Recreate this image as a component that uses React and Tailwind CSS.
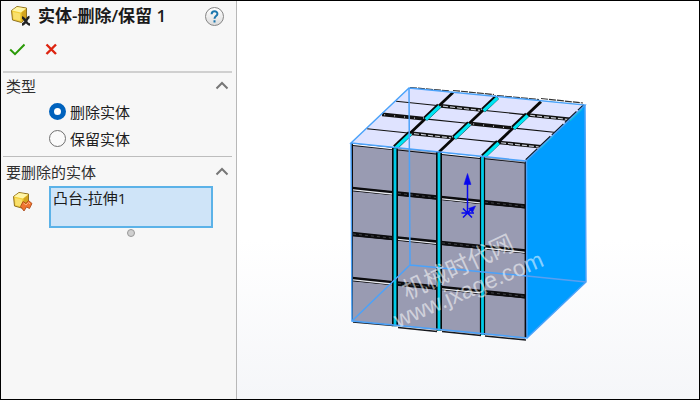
import React, { useState } from 'react';

const COLUMNS = [[352, 393], [397, 437], [441, 481], [484, 526]];
const ROW_LINES = [189, 234, 279];
const DEPTH_STEPS = [0, 0.26, 0.52, 0.76, 1];

// Point on the top face: x along the front edge, t is the depth
const topPoint = (x, t) => [x + 58 * t, 143 + (x - 352) * 0.104 - 55 * t];
const frontY = (x, y) => y + (x - 352) * 0.1;
const toPoints = (list) => list.map((p) => p.join(',')).join(' ');

function BodyIcon({ children }) {
  return (
    <svg className="h-6 w-6 shrink-0" viewBox="0 0 24 24" aria-hidden="true">
      <path d="M2.5 6.5 8 2.5 17.5 4 17.5 14 12.5 18.5 3.5 16Z" fill="#f3cf3a" stroke="#927321" strokeLinejoin="round" />
      <path d="M3 6.5 8 3 17 4.5 12 8.5Z" fill="#fff6a8" />
      <path d="M12.5 8.5 17 5V13.5L12.5 18Z" fill="#d4a51f" />
      <path d="M4 8 11 9.5V16.5L4.5 15Z" fill="#f9e06c" />
      {children}
    </svg>
  );
}

function SectionHeader({ title, open, onToggle }) {
  return (
    <div className="flex h-[25px] items-center justify-between pl-[3px] pr-0.5">
      <h2 className="text-[15px] leading-5 text-[#303030]">{title}</h2>
      <button type="button" aria-label={title} aria-expanded={open} onClick={onToggle}>
        <svg className="h-3 w-4" viewBox="0 0 16 12" fill="none" stroke="#777" strokeWidth="2" aria-hidden="true">
          <path d={open ? 'M2.5 8.5 8 3 13.5 8.5' : 'M2.5 3 8 8.5 13.5 3'} />
        </svg>
      </button>
    </div>
  );
}

function RadioOption({ label, value, selected, onSelect }) {
  return (
    <label className="flex h-[27px] items-center gap-1 text-[15px] leading-5 text-[#202020]">
      <input
        type="radio"
        name="body-mode"
        value={value}
        checked={selected}
        onChange={() => onSelect(value)}
        className="h-[17px] w-[17px] appearance-none rounded-full border border-[#707070] bg-[#fafafa] checked:border-[5px] checked:border-[#0062bd] checked:bg-white"
      />
      {label}
    </label>
  );
}

function Cube() {
  return (
    <svg className="h-full w-full" viewBox="237 1 462 398" role="img" aria-label="凸台-拉伸1">
      {/* Bodies under the tiles */}
      <polygon points="351,143 409,88 585,105 526,161" fill="#f4f6ff" />
      <polygon points="351,143 526,161 527,338 352,321" fill="#0b0b0d" />
      <polygon points="526,161 585,105 586,282 527,338" fill="#009dff" />

      {/* Top face */}
      {COLUMNS.map(([x1, x2], c) => (
        <g key={x1}>
          {DEPTH_STEPS.slice(0, 4).map((t, r) => (
            <polygon
              key={t}
              points={toPoints([topPoint(x1, t), topPoint(x2, t), topPoint(x2, DEPTH_STEPS[r + 1]), topPoint(x1, DEPTH_STEPS[r + 1])])}
              fill="#dfe3ff"
            />
          ))}
          {[1, 2, 3].map((r) => {
            const [ax, ay] = topPoint(x1, DEPTH_STEPS[r]);
            const [bx, by] = topPoint(x2, DEPTH_STEPS[r]);
            const thick = (c + r) % 2 === 0;
            return (
              <g key={r}>
                <line x1={ax} y1={ay} x2={bx} y2={by} stroke="#111" strokeWidth={thick ? 3.6 : 1.1} />
                {thick && (
                  <line x1={ax + 2} y1={ay + 0.3} x2={bx - 1} y2={by + 0.3} stroke="#c6c9d2" strokeWidth="1.2" strokeDasharray={r === 2 ? '1 9' : '5 2'} />
                )}
              </g>
            );
          })}
        </g>
      ))}
      {[395, 439, 483].map((x, c) => {
        const [ax, ay] = topPoint(x, 0);
        const [bx, by] = topPoint(x, 1);
        return (
          <g key={x}>
            <line x1={ax} y1={ay} x2={bx} y2={by} stroke="#080808" strokeWidth="2.8" />
            {[0, 1, 2, 3].filter((r) => (r + c) % 2 === 0).map((r) => {
              const [sx, sy] = topPoint(x, DEPTH_STEPS[r]);
              const [ex, ey] = topPoint(x, DEPTH_STEPS[r + 1]);
              return (
                <g key={r}>
                  <line x1={sx} y1={sy} x2={ex} y2={ey} stroke="#080808" strokeWidth="5.4" />
                  <line x1={sx + 0.6} y1={sy + 0.6} x2={ex + 0.6} y2={ey + 0.6} stroke="#00e4f2" strokeWidth="3.4" />
                </g>
              );
            })}
          </g>
        );
      })}
      <path d="M526 160 584 105" stroke="#101820" strokeWidth="2.2" strokeDasharray="16 2" />
      <path d="M540 148.5 553 136M570 120.500 582 109" stroke="#00ccd8" strokeWidth="1.6" />
      <path d="M410 87.5 450 91M453 90.500l41 4M497 95.500l42 4M541 98.500l42 4.500" stroke="#333" strokeWidth="1.2" strokeDasharray="7 1" />

      {/* Front face */}
      {COLUMNS.map(([x1, x2], c) => {
        const stops = [144, ...ROW_LINES, 323];
        return (
          <g key={x1}>
            {stops.slice(0, 4).map((y, r) => (
              <polygon
                key={y}
                points={toPoints([
                  [x1 + 1, frontY(x1, y + 2)],
                  [x2 - 1, frontY(x2, y + 2)],
                  [x2 - 1, frontY(x2, stops[r + 1] - 1.5)],
                  [x1 + 1, frontY(x1, stops[r + 1] - 1.5)],
                ])}
                fill="#999bb2"
              />
            ))}
            {ROW_LINES.map((y, r) => {
              const light = (c + r) % 2 === 0;
              return (
                <g key={y}>
                  <line x1={x1} y1={frontY(x1, y)} x2={x2} y2={frontY(x2, y)} stroke="#0c0c0e" strokeWidth="4.4" />
                  <line
                    x1={x1 + 1}
                    y1={frontY(x1, light ? y + 0.9 : y)}
                    x2={x2 - 1}
                    y2={frontY(x2, light ? y + 0.9 : y)}
                    stroke={light ? '#e8eaf0' : '#66686f'}
                    strokeWidth={light ? 1.3 : 0.6}
                    strokeDasharray={light ? undefined : '3 3'}
                  />
                </g>
              );
            })}
            <line x1={x1 + 1} y1={frontY(x1, 144.3)} x2={x2 - 1} y2={frontY(x2, 144.3)} stroke={c % 2 === 0 ? '#f7f8ff' : '#a6a9b8'} strokeWidth="1.5" />
          </g>
        );
      })}
      {[395, 439, 482.5].map((x) => (
        <g key={x}>
          <line x1={x} y1={frontY(x, 144)} x2={x} y2={frontY(x, 322)} stroke="#080808" strokeWidth="5.2" />
          <line x1={x} y1={frontY(x, 144)} x2={x} y2={frontY(x, 322)} stroke="#00cbe8" strokeWidth="2.8" />
        </g>
      ))}
      <path d="M353 322 393 325.500M398 327.500l39 4M442 331.500l39 4M485 336l41 4" stroke="#16181d" strokeWidth="1.5" />
      <path d="M525.300 163V338" stroke="#0c0c0e" strokeWidth="1.4" />

      {/* Selected body outline */}
      <g fill="none" stroke="#4ba2fa" strokeWidth="1.5">
        <path d="M351 143 409 88 585 105 526 161Z" />
        <path d="M351 143 352 321 527 338 526.500 161M527 338 586 282 585 105" />
        <path d="M409 88 410 265 352 321M410 265 527 276" />
        <path d="M527 276 586 282" stroke="#5a9ff0" />
      </g>

      {/* Origin */}
      <g stroke="#0808ee" fill="none" strokeWidth="1.5">
        <path d="M467.5 213V184M461.5 213H474M463 208.5l9 9M463 217.5l9-9" />
        <path d="M467.5 173.5 471 184.5H464Z" fill="#0808ee" strokeWidth="0.5" />
        <path d="M475.5 206 468.5 208.5 472.5 212.5Z" fill="#0808ee" strokeWidth="0.5" />
      </g>

      {/* Watermark */}
      <g fill="#ffffff" fillOpacity="0.55" fontFamily='"Liberation Sans", "Noto Sans CJK SC", sans-serif'>
        <text transform="translate(407 300) rotate(-25)" fontSize="24">机械时代网</text>
        <text transform="translate(398 328) rotate(-23)" fontSize="23">www.jxage.com</text>
      </g>
    </svg>
  );
}

export default function App() {
  const [mode, setMode] = useState('delete');
  const [typeOpen, setTypeOpen] = useState(true);
  const [bodiesOpen, setBodiesOpen] = useState(true);

  return (
    <div className="flex h-screen border border-black bg-white font-['Open_Sans','Noto_Sans_CJK_SC',sans-serif]">
      {/* Property panel */}
      <aside className="w-[236px] shrink-0 border-r border-[#b8b8b8] bg-[#f7f7f7] pl-[2px] pr-1">
        <header className="flex h-[30px] items-center pl-1.5 pr-2">
          <BodyIcon>
            <path d="M13 13.5c3 0 4 7 8 7M20.5 13c-3 0-3.5 7.5-7.5 7.5" fill="none" stroke="#222" strokeWidth="2.3" />
          </BodyIcon>
          <h1 className="flex-1 whitespace-nowrap pl-[5px] text-[17px] font-semibold leading-6 text-[#1b1b1b]">实体-删除/保留 1</h1>
          <button
            type="button"
            aria-label="帮助"
            className="h-[19px] w-[19px] rounded-full border border-[#858585] bg-linear-to-b from-white to-[#dcdcdc]"
          >
            <svg className="h-full w-full" viewBox="0 0 17 17" fill="none" stroke="#1b76ad" strokeWidth="2" aria-hidden="true">
              <path d="M5.6 6.2C5.700 2.200 11.600 2.400 11.400 6 11.300 8.200 8.500 8 8.500 10.800M8.500 12.300v2.200" />
            </svg>
          </button>
        </header>

        <div className="flex h-10 items-center gap-4 pb-1 pl-1">
          <button type="button" aria-label="确定" className="flex h-5 w-5 items-center justify-center">
            <svg className="h-4 w-4" viewBox="0 0 16 16" fill="none" stroke="#2b9a08" strokeWidth="2" aria-hidden="true">
              <path d="M1.2 8.500 6 13.200 15.500 3.500" />
            </svg>
          </button>
          <button type="button" aria-label="取消" className="flex h-5 w-5 items-center justify-center">
            <svg className="h-4 w-4" viewBox="0 0 16 16" fill="none" stroke="#dd2410" strokeWidth="2.4" aria-hidden="true">
              <path d="M1.500 3.500 11 13M11 3.500 1.500 13" />
            </svg>
          </button>
        </div>

        <section className="border-t-2 border-[#d0d0d0]">
          <SectionHeader title="类型" open={typeOpen} onToggle={() => setTypeOpen(!typeOpen)} />
          {typeOpen && (
            <div className="pb-1 pl-[46px]">
              <RadioOption label="删除实体" value="delete" selected={mode === 'delete'} onSelect={setMode} />
              <RadioOption label="保留实体" value="keep" selected={mode === 'keep'} onSelect={setMode} />
            </div>
          )}
        </section>

        <section className="border-t border-[#bdbdbd] pt-0.5">
          <SectionHeader title="要删除的实体" open={bodiesOpen} onToggle={() => setBodiesOpen(!bodiesOpen)} />
          {bodiesOpen && (
            <div className="flex pl-2 pt-0.5">
              <div className="w-[38px] pt-1">
                <BodyIcon>
                  <path d="M9.5 16.5 12 11.5 15 13.5 17.5 10.5 21 13.5 18.5 18.5 15.5 17 13 21Z" fill="#ef7430" stroke="#a64212" strokeWidth="0.8" />
                  <path d="M12.5 13 15 15 17.5 12.5 19 14" fill="none" stroke="#ffb27d" />
                </BodyIcon>
              </div>
              <div className="w-[164px]">
                <textarea
                  readOnly
                  aria-label="要删除的实体"
                  defaultValue="凸台-拉伸1"
                  className="block h-[42px] w-full resize-none overflow-hidden border-2 border-[#5bb2e8] bg-[#cfe4f8] px-[2px] text-[15px] leading-5 text-[#1b1b1b] outline-none"
                />
                <div className="mx-auto mt-px h-2 w-2 rounded-full border border-[#999] bg-[#d0d0d0]" />
              </div>
            </div>
          )}
        </section>
      </aside>

      {/* Graphics area */}
      <main className="min-w-0 flex-1 bg-linear-to-b from-white from-60% to-[#f5f6f9]">
        <Cube />
      </main>
    </div>
  );
}
